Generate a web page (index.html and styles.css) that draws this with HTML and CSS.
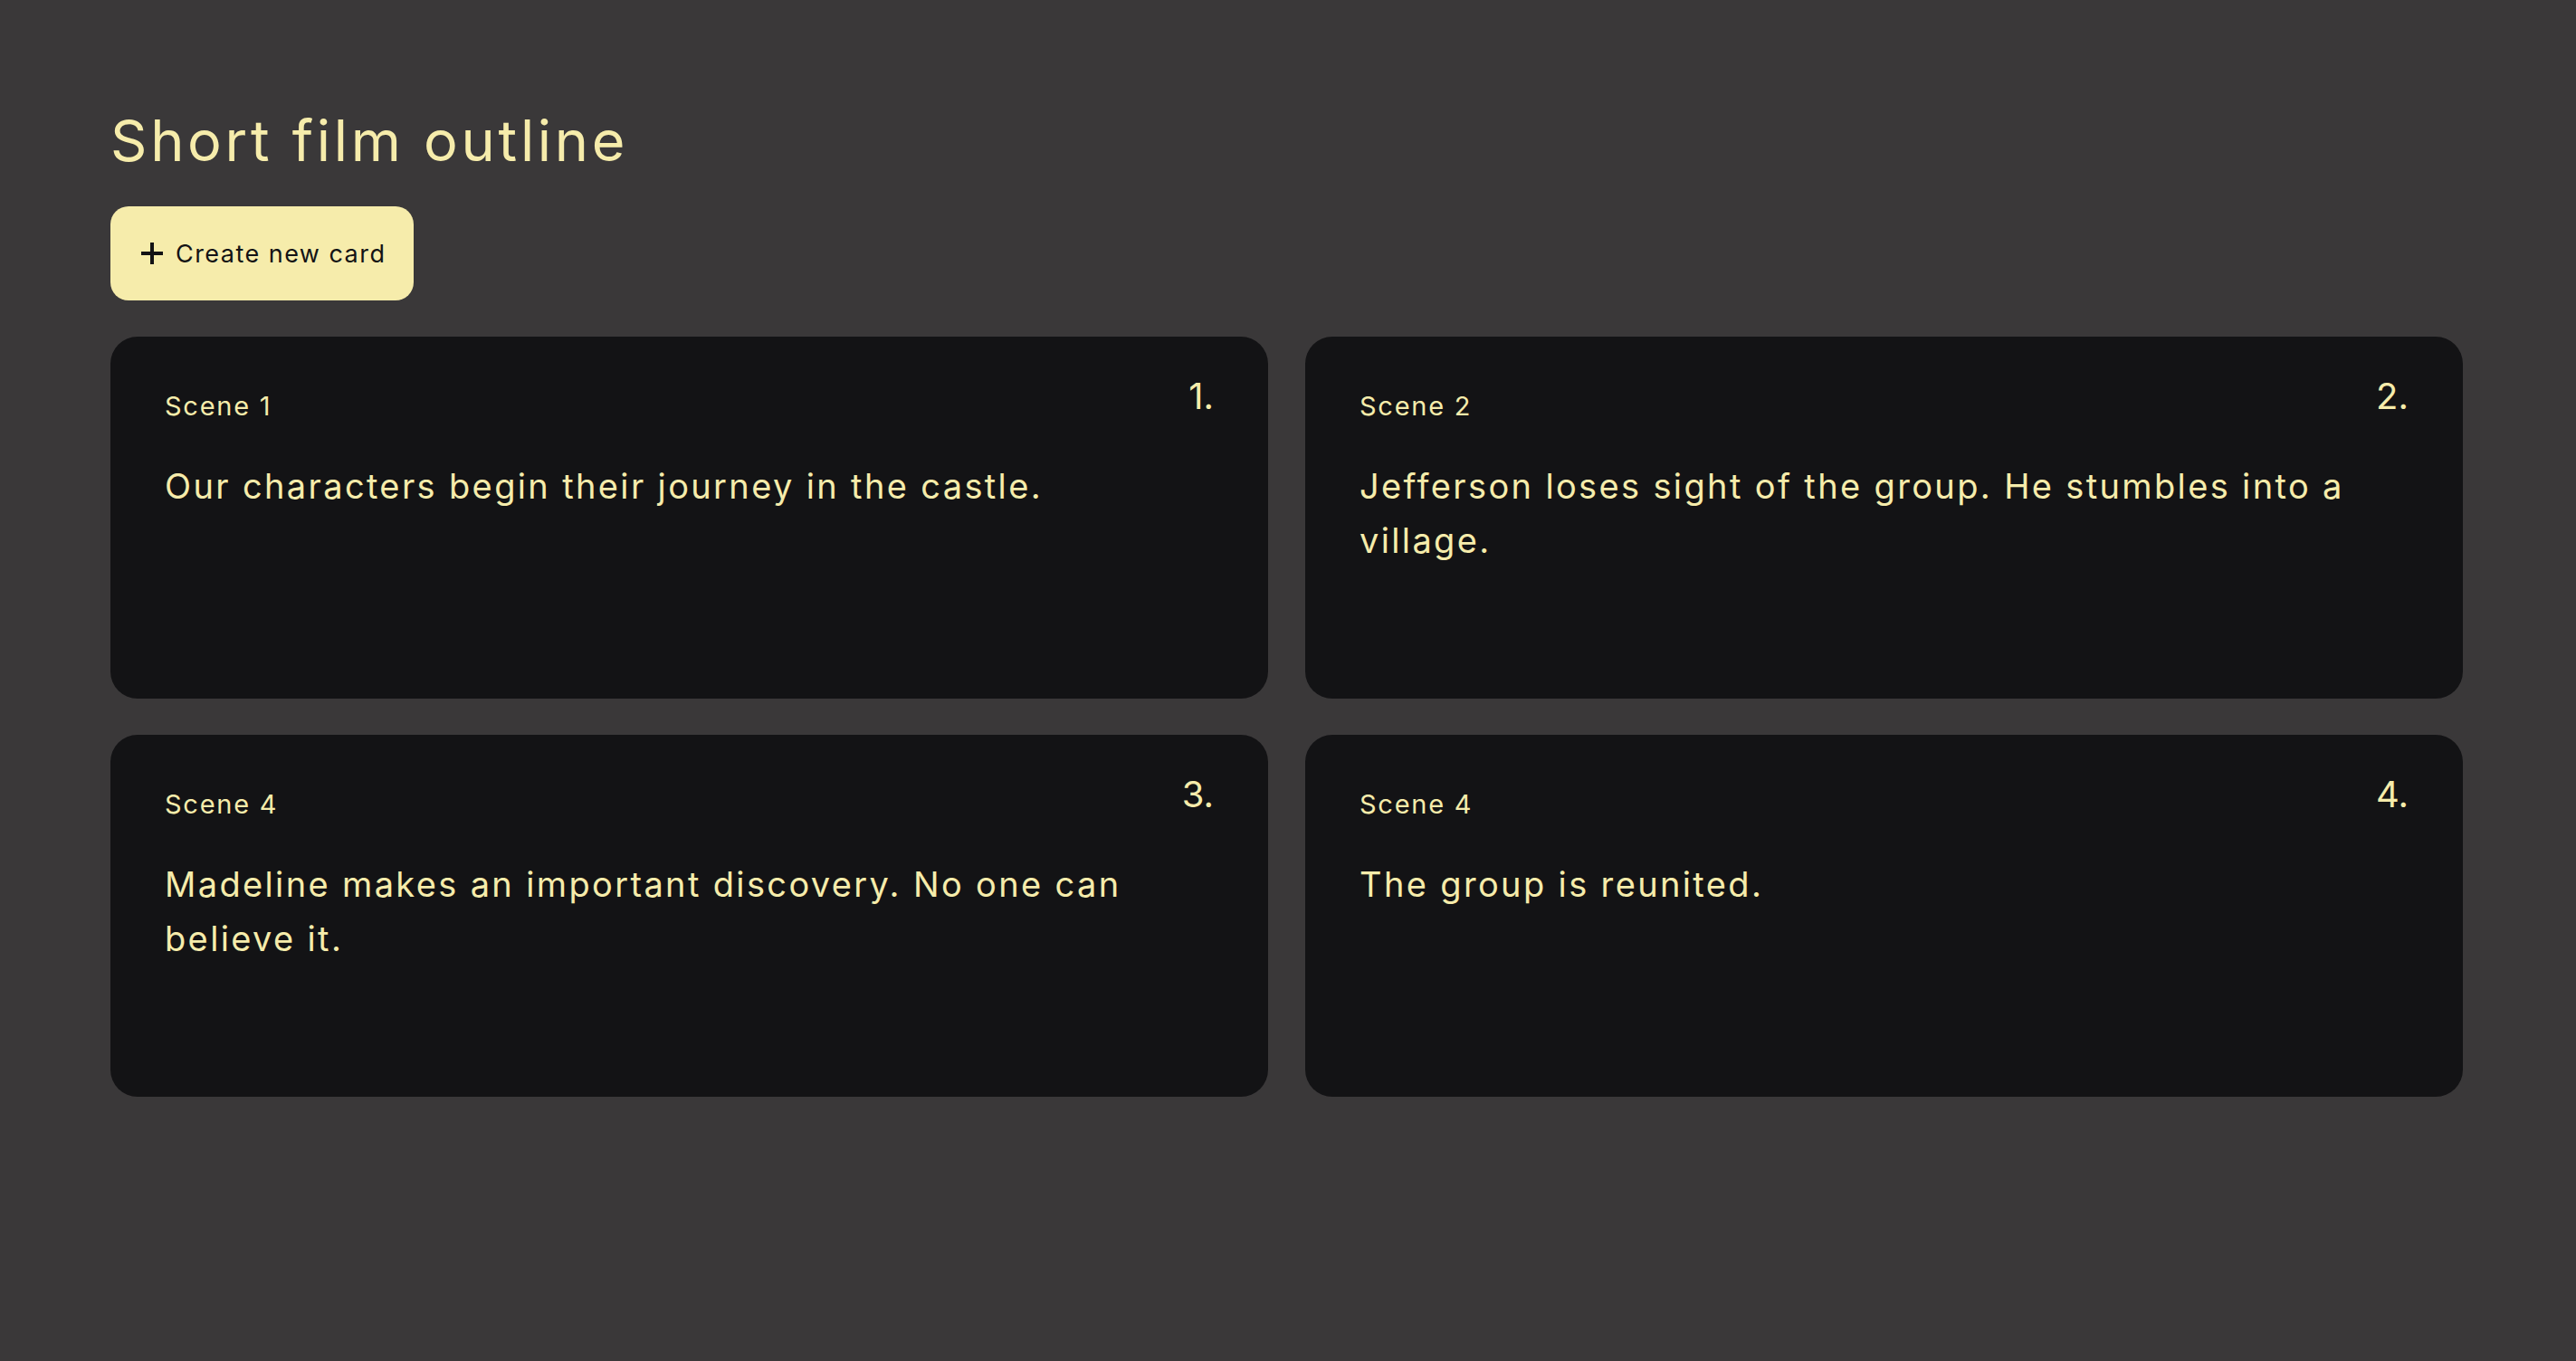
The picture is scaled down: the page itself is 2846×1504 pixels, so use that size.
FILE: index.html
```html
<!DOCTYPE html>
<html lang="en">
<head>
<meta charset="utf-8">
<title>Short film outline</title>
<link rel="stylesheet" href="styles.css">
</head>
<body>
<main class="page">
  <h1 class="title">Short film outline</h1>
  <button class="create-btn" type="button">
    <svg class="plus" viewBox="0 0 26 26" aria-hidden="true"><rect x="11" y="1" width="4" height="24" fill="currentColor"/><rect x="1" y="11" width="24" height="4" fill="currentColor"/></svg>
    <span>Create new card</span>
  </button>
  <section class="grid">
    <article class="card">
      <header class="card-head"><span class="label">Scene 1</span><span class="num">1.</span></header>
      <p class="body">Our characters begin their journey in the castle.</p>
    </article>
    <article class="card">
      <header class="card-head"><span class="label">Scene 2</span><span class="num">2.</span></header>
      <p class="body">Jefferson loses sight of the group. He stumbles into a village.</p>
    </article>
    <article class="card">
      <header class="card-head"><span class="label">Scene 4</span><span class="num">3.</span></header>
      <p class="body">Madeline makes an important discovery. No one can believe it.</p>
    </article>
    <article class="card">
      <header class="card-head"><span class="label">Scene 4</span><span class="num">4.</span></header>
      <p class="body">The group is reunited.</p>
    </article>
  </section>
</main>
</body>
</html>
```
FILE: styles.css
```css
html, body {
  margin: 0;
  padding: 0;
  background: #3a3839;
}
body {
  font-family: Inter, "Noto Sans", sans-serif;
  color: #f6ecab;
  min-height: 1504px;
}
.page {
  padding: 117px 125px 0 122px;
}
.title {
  margin: 0;
  font-size: 63px;
  font-weight: 400;
  line-height: 76px;
  letter-spacing: 0.059em;
  color: #f6ecab;
}
.create-btn {
  margin-top: 35px;
  display: flex;
  align-items: center;
  gap: 13px;
  height: 104px;
  padding: 0 31px 0 33px;
  border: 0;
  border-radius: 20px;
  background: #f6ecab;
  color: #131315;
  font-family: Inter, "Noto Sans", sans-serif;
  font-size: 27px;
  font-weight: 400;
  letter-spacing: 0.054em;
}
.plus {
  width: 26px;
  height: 26px;
}
.grid {
  margin-top: 40px;
  display: grid;
  grid-template-columns: 1fr 1fr;
  column-gap: 41px;
  row-gap: 40px;
}
.card {
  background: #131315;
  border-radius: 30px;
  height: 400px;
  box-sizing: border-box;
  padding: 36px 60px 0 60px;
}
.card-head {
  display: flex;
  justify-content: space-between;
  align-items: flex-start;
}
.label {
  margin-top: 19px;
  font-size: 29px;
  line-height: 43px;
  letter-spacing: 0.06em;
}
.num {
  font-size: 40px;
  line-height: 60px;
  letter-spacing: 0;
}
.body {
  margin: 37px 0 0 0;
  font-size: 38px;
  line-height: 60px;
  letter-spacing: 0.062em;
}
```
